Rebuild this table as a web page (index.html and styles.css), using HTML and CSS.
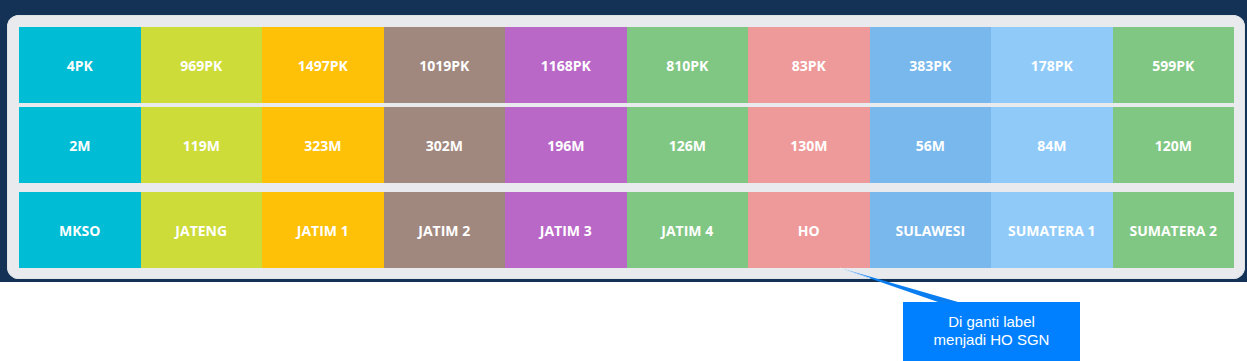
FILE: index.html
```html
<!DOCTYPE html>
<html>
<head>
<meta charset="utf-8">
<link rel="stylesheet" href="styles.css">
</head>
<body>
<div class="stage">
  <div class="panel">
    <div class="row row-gap-sm">
      <div class="cell c1">4PK</div>
      <div class="cell c2">969PK</div>
      <div class="cell c3">1497PK</div>
      <div class="cell c4">1019PK</div>
      <div class="cell c5">1168PK</div>
      <div class="cell c6">810PK</div>
      <div class="cell c7">83PK</div>
      <div class="cell c8">383PK</div>
      <div class="cell c9">178PK</div>
      <div class="cell c10">599PK</div>
    </div>
    <div class="row row-gap-lg">
      <div class="cell c1">2M</div>
      <div class="cell c2">119M</div>
      <div class="cell c3">323M</div>
      <div class="cell c4">302M</div>
      <div class="cell c5">196M</div>
      <div class="cell c6">126M</div>
      <div class="cell c7">130M</div>
      <div class="cell c8">56M</div>
      <div class="cell c9">84M</div>
      <div class="cell c10">120M</div>
    </div>
    <div class="row">
      <div class="cell c1">MKSO</div>
      <div class="cell c2">JATENG</div>
      <div class="cell c3">JATIM 1</div>
      <div class="cell c4">JATIM 2</div>
      <div class="cell c5">JATIM 3</div>
      <div class="cell c6">JATIM 4</div>
      <div class="cell c7">HO</div>
      <div class="cell c8">SULAWESI</div>
      <div class="cell c9">SUMATERA 1</div>
      <div class="cell c10">SUMATERA 2</div>
    </div>
  </div>
</div>
<svg class="pointer" width="130" height="40" viewBox="0 0 130 40">
  <polygon points="0,1 98,35 118,35" fill="#0a7ef0"/>
  <line x1="0" y1="1" x2="30" y2="11" stroke="#ffffff" stroke-width="1" opacity="0.6"/>
</svg>
<div class="callout">Di ganti label<br>menjadi HO SGN</div>
</body>
</html>
```

FILE: styles.css
```css
html, body {
  margin: 0;
  padding: 0;
  background: #ffffff;
}
body {
  width: 1247px;
  height: 361px;
  overflow: hidden;
  position: relative;
}
.stage {
  background: #133256;
  padding: 15px 2px 3px 7px;
}
.panel {
  background: #e8eaed;
  border-radius: 12px;
  padding: 12px 11px 11px 12px;
  box-shadow: inset 0 0 0 1px #dfe2e6;
}
.row {
  display: grid;
  grid-template-columns: repeat(10, 1fr);
  height: 76px;
}
.row-gap-sm { margin-bottom: 4px; }
.row-gap-lg { margin-bottom: 9px; }
.cell {
  display: flex;
  align-items: center;
  justify-content: center;
  color: #ffffff;
  font-family: "Open Sans", "Noto Sans", sans-serif;
  font-weight: 700;
  font-size: 14px;
}
.c1 { background: #00bcd4; }
.c2 { background: #cddc39; }
.c3 { background: #ffc107; }
.c4 { background: #a1887f; }
.c5 { background: #ba68c8; }
.c6 { background: #81c784; }
.c7 { background: #ef9a9a; }
.c8 { background: #78b8ec; }
.c9 { background: #90caf9; }
.c10 { background: #81c784; }
.pointer {
  position: absolute;
  left: 840px;
  top: 267px;
}
.callout {
  position: absolute;
  left: 903px;
  top: 302px;
  width: 177px;
  height: 62px;
  background: #0080ff;
  color: #ffffff;
  font-family: "Liberation Sans", Arial, sans-serif;
  font-size: 15px;
  line-height: 18px;
  text-align: center;
  padding-top: 11px;
  box-sizing: border-box;
}
```
